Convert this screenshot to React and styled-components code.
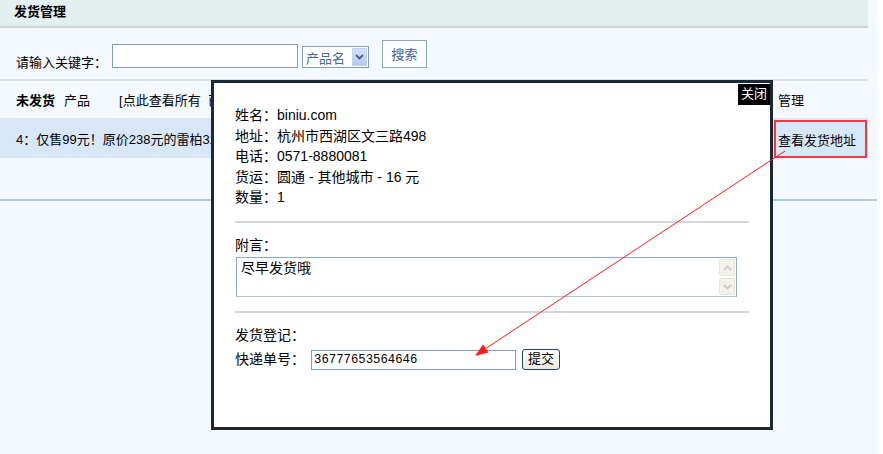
import React from 'react';
import styled, { createGlobalStyle } from 'styled-components';

const GlobalStyle = createGlobalStyle`
  html, body { margin: 0; padding: 0; background: #fff; }
  body { font-family: "Liberation Sans", "Noto Sans CJK SC", sans-serif; }
`;

const Page = styled.div`
  position: relative;
  width: 877px;
  height: 454px;
  background: #f3f9fd;
  overflow: hidden;
  font-size: 13px;
  color: #000;
`;

const TitleBar = styled.div`
  width: 868px;
  height: 28px;
  box-sizing: border-box;
  background: #e4efef;
  border-bottom: 2px solid #cfd5d5;
  padding-left: 14px;
  font-weight: bold;
  line-height: 24px;
`;

const SearchBar = styled.div`
  width: 868px;
  height: 53px;
  box-sizing: border-box;
  border-bottom: 2px solid #dde1e2;
  display: flex;
  align-items: flex-end;
  padding: 0 0 11px 16px;
`;

const SearchLabel = styled.span`
  width: 96px;
  line-height: 16px;
  margin-bottom: -3px;
`;

const TextInput = styled.div`
  box-sizing: border-box;
  width: ${(p) => p.$w}px;
  height: ${(p) => p.$h}px;
  background: #fff;
  border: 1px solid #7f9db9;
  font-family: "Liberation Mono", monospace;
  font-size: 12.3px;
  line-height: ${(p) => p.$h - 2}px;
  padding-left: 2px;
  color: #000;
`;

const Select = styled.div`
  box-sizing: border-box;
  width: 67px;
  height: 22px;
  margin-left: 4px;
  background: #fff;
  border: 1px solid #7f9db9;
  display: flex;
  align-items: center;
  justify-content: space-between;
  padding: 0 1px 0 3px;
  color: #4a6696;
  font-size: 13px;
`;

const SelectArrow = styled.span`
  width: 15px;
  height: 18px;
  box-sizing: border-box;
  background: linear-gradient(#d3e1fb, #b3c9f5);
  border: 1px solid #c2d3f2;
  display: flex;
  align-items: center;
  justify-content: center;
`;

const SearchButton = styled.div`
  box-sizing: border-box;
  width: 45px;
  height: 28px;
  margin-left: 13px;
  background: #fff;
  border: 1px solid #8ba6c6;
  color: #3a5f9e;
  display: flex;
  align-items: center;
  justify-content: center;
  padding-bottom: 2px;
`;

const TableBody = styled.div`
  width: 877px;
  border-bottom: 2px solid #a9c8e6;
`;

const Row = styled.div`
  display: grid;
  grid-template-columns: 774px 94px;
  width: 868px;
  height: ${(p) => p.$h}px;
  box-sizing: border-box;
  background: ${(p) => p.$bg || 'transparent'};
  border-bottom: ${(p) => (p.$line ? `1px solid ${p.$line}` : 'none')};
`;

const Cell = styled.div`
  display: flex;
  align-items: center;
  box-sizing: border-box;
  padding-left: ${(p) => p.$pad ?? 16}px;
  white-space: nowrap;
  overflow: hidden;
  ${(p) => (p.$marked ? 'border: 2px solid #ee3b3f; height: 38px; align-self: end; width: 93px;' : '')}
`;

const Strong = styled.b`
  margin-right: 9px;
`;

const Gap = styled.span`
  margin-left: ${(p) => p.$w}px;
`;

/* popup with the shipping details */
const Popup = styled.div`
  position: absolute;
  left: 211px;
  top: 80px;
  width: 562px;
  height: 350px;
  box-sizing: border-box;
  background: #fff;
  border: 3px solid #1b2835;
  padding: 22px 0 0 21px;
  font-size: 14px;
  line-height: 20.5px;
  z-index: 2;
`;

const CloseTab = styled.div`
  position: absolute;
  right: 0;
  top: 1px;
  width: 32px;
  height: 21px;
  background: #000;
  color: #fff;
  font-size: 13px;
  line-height: 20px;
  text-align: center;
`;

const Line = styled.div``;

const Divider = styled.div`
  width: 514px;
  border-top: 2px solid #d6d6d6;
  margin: ${(p) => p.$top}px 0 12px;
`;

const NoteBox = styled.div`
  box-sizing: border-box;
  width: 501px;
  height: 40px;
  margin: 2px 0 0 1px;
  border: 1px solid #8ea9c6;
  border-bottom-color: #b2c4d6;
  display: flex;
  justify-content: space-between;
`;

const NoteText = styled.div`
  padding: 1px 0 0 4px;
  line-height: 18px;
`;

const ScrollBar = styled.div`
  display: flex;
  flex-direction: column;
  gap: 2px;
  padding: 1px 1px 0 0;
`;

const ScrollButton = styled.div`
  box-sizing: border-box;
  width: 16px;
  height: 17px;
  background: #f2f1ea;
  border: 1px solid #e7e6df;
  border-radius: 2px;
  display: flex;
  align-items: center;
  justify-content: center;
`;

const FormRow = styled.div`
  display: flex;
  align-items: center;
  height: 24px;
  margin-top: 2px;
`;

const FormLabel = styled.span`
  width: 76px;
`;

const SubmitButton = styled.div`
  box-sizing: border-box;
  width: 38px;
  height: 21px;
  margin-left: 6px;
  border: 1px solid #21456e;
  border-radius: 3px;
  background: linear-gradient(#ffffff, #ece9dd);
  font-size: 13px;
  line-height: 18px;
  text-align: center;
`;

const Overlay = styled.svg`
  position: absolute;
  left: 0;
  top: 0;
  pointer-events: none;
  z-index: 3;
`;

const Chevron = ({ up, color }) => (
  <svg width="9" height="6" viewBox="0 0 9 6">
    <path
      d={up ? 'M1 5 L4.5 1.5 L8 5' : 'M1 1 L4.5 4.5 L8 1'}
      fill="none"
      stroke={color}
      strokeWidth="1.8"
    />
  </svg>
);

export default function App() {
  return (
    <>
      <GlobalStyle />
      <Page>
        <TitleBar>发货管理</TitleBar>

        <SearchBar>
          <SearchLabel>请输入关键字：</SearchLabel>
          <TextInput $w={186} $h={24} />
          <Select>
            <span>产品名</span>
            <SelectArrow>
              <Chevron color="#4d5f80" />
            </SelectArrow>
          </Select>
          <SearchButton>搜索</SearchButton>
        </SearchBar>

        <TableBody>
          <Row $h={38} $line="#dde2e6">
            <Cell>
              <Strong>未发货</Strong>产品
              <Gap $w={29}>[点此查看所有 &nbsp;已发货订单]</Gap>
            </Cell>
            <Cell $pad={4}>管理</Cell>
          </Row>
          <Row $h={39} $bg="#d8e7f7">
            <Cell>4：仅售99元！原价238元的雷柏3100P无线光学鼠标</Cell>
            <Cell $pad={2} $marked>查看发货地址</Cell>
          </Row>
          <Row $h={41} />
        </TableBody>

        <Popup>
          <CloseTab>关闭</CloseTab>
          <Line>姓名：biniu.com</Line>
          <Line>地址：杭州市西湖区文三路498</Line>
          <Line>电话：0571-8880081</Line>
          <Line>货运：圆通 - 其他城市 - 16 元</Line>
          <Line>数量：1</Line>
          <Divider $top={13} />
          <Line>附言：</Line>
          <NoteBox>
            <NoteText>尽早发货哦</NoteText>
            <ScrollBar>
              <ScrollButton>
                <Chevron up color="#cdccc4" />
              </ScrollButton>
              <ScrollButton>
                <Chevron color="#cdccc4" />
              </ScrollButton>
            </ScrollBar>
          </NoteBox>
          <Divider $top={14} />
          <Line>发货登记：</Line>
          <FormRow>
            <FormLabel>快递单号：</FormLabel>
            <TextInput $w={205} $h={20}>36777653564646</TextInput>
            <SubmitButton>提交</SubmitButton>
          </FormRow>
        </Popup>

        <Overlay width="877" height="454">
          <line x1="785" y1="151" x2="485" y2="349" stroke="#ff1a1a" strokeWidth="1" />
          <polygon points="475,356 488.5,352.5 483,344.5" fill="#ff1a1a" />
        </Overlay>
      </Page>
    </>
  );
}
